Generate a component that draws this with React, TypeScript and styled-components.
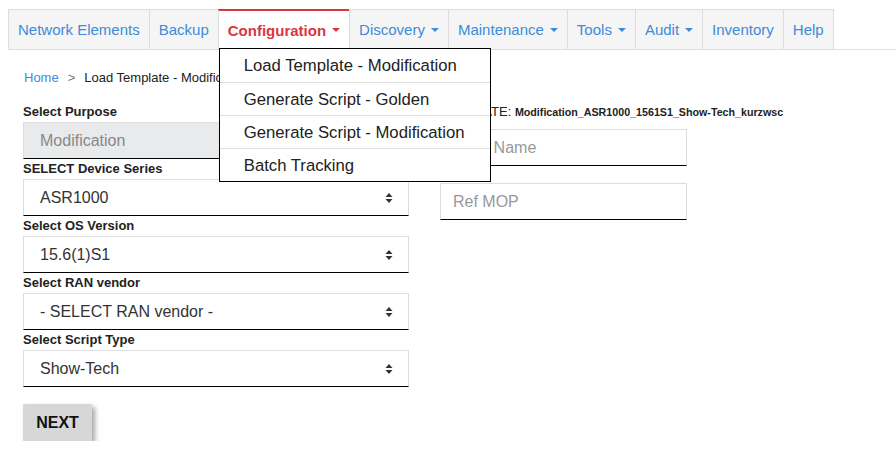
import React from "react";
import styled, { createGlobalStyle } from "styled-components";

const GlobalStyle = createGlobalStyle`
  body {
    margin: 9px 0 0 8px;
    font-family: "Liberation Sans", Arial, sans-serif;
    background: #fff;
    color: #222;
  }
`;

const Nav = styled.nav`
  position: relative;
  display: flex;
  height: 40px;
  border-bottom: 1px solid #ddd;
`;

const Tab = styled.div<{ $active?: boolean }>`
  position: relative;
  display: flex;
  align-items: center;
  gap: 6px;
  padding: 0 9px;
  font-size: 15px;
  color: ${(p) => (p.$active ? "#d9363e" : "#3d8bd9")};
  font-weight: ${(p) => (p.$active ? "bold" : "normal")};
  background: ${(p) => (p.$active ? "#fff" : "#f5f5f5")};
  border: 1px solid #ddd;
  border-top: ${(p) => (p.$active ? "2px solid #d9363e" : "1px solid #ddd")};
  border-bottom: none;
  margin-right: -1px;
`;

const Caret = styled.span`
  display: inline-block;
  border-left: 4px solid transparent;
  border-right: 4px solid transparent;
  border-top: 4px solid currentColor;
`;

const Menu = styled.ul`
  position: absolute;
  top: 37px;
  left: 0;
  width: 270px;
  margin: 0;
  padding: 0;
  list-style: none;
  background: #fff;
  border: 1px solid #000;
  z-index: 10;
`;

const MenuItem = styled.li`
  height: 33px;
  line-height: 33px;
  padding-left: 24px;
  font-size: 16.7px;
  font-weight: normal;
  color: #222;
  white-space: nowrap;
  border-top: 1px solid #ddd;
  box-sizing: border-box;
  &:first-child {
    border-top: none;
  }
`;

const Main = styled.main`
  padding: 18px 0 0 15px;
`;

const Crumbs = styled.div`
  display: flex;
  gap: 9px;
  font-size: 13px;
  color: #222;
  height: 18px;
  align-items: center;
  margin-bottom: 16px;
  padding-left: 1px;
`;

const CrumbLink = styled.a`
  color: #3d8bd9;
  text-decoration: none;
`;

const Sep = styled.span`
  color: #777;
`;

const Columns = styled.div`
  display: flex;
  gap: 31px;
`;

const Column = styled.div<{ $width: number }>`
  display: flex;
  flex-direction: column;
  width: ${(p) => p.$width}px;
`;

const Label = styled.label`
  display: block;
  font-size: 13px;
  font-weight: bold;
  line-height: 20px;
  color: #222;
`;

const Field = styled.div<{ $disabled?: boolean }>`
  display: flex;
  align-items: center;
  justify-content: space-between;
  box-sizing: border-box;
  height: 37px;
  padding: 0 15px 0 16px;
  font-size: 16px;
  color: ${(p) => (p.$disabled ? "#888" : "#333")};
  background: ${(p) => (p.$disabled ? "#e9eaeb" : "#fff")};
  border: 1px solid #ddd;
  border-bottom: 1px solid #000;
`;

const Arrows = styled.svg`
  width: 8px;
  height: 12px;
`;

const TemplateLine = styled.div`
  font-size: 13px;
  line-height: 20px;
  color: #222;
  margin-bottom: 7px;
  white-space: nowrap;
  b {
    font-size: 10.7px;
  }
`;

const TextInput = styled.input`
  box-sizing: border-box;
  width: 247px;
  height: 37px;
  padding: 0 12px;
  font-family: inherit;
  font-size: 16px;
  color: #333;
  border: 1px solid #ddd;
  border-bottom: 1px solid #000;
  outline: none;
  margin-bottom: 17px;
  &::placeholder {
    color: #999;
  }
`;

const NextButton = styled.button`
  margin-top: 17px;
  width: 69px;
  height: 37px;
  border: none;
  background: #d6d7d7;
  font-family: inherit;
  font-size: 16px;
  font-weight: bold;
  color: #111;
  box-shadow: 3px 3px 5px rgba(0, 0, 0, 0.35);
`;

const tabs = [
  { name: "Network Elements" },
  { name: "Backup" },
  { name: "Configuration", caret: true, active: true },
  { name: "Discovery", caret: true },
  { name: "Maintenance", caret: true },
  { name: "Tools", caret: true },
  { name: "Audit", caret: true },
  { name: "Inventory" },
  { name: "Help" },
];

const menuItems = [
  "Load Template - Modification",
  "Generate Script - Golden",
  "Generate Script - Modification",
  "Batch Tracking",
];

const selects = [
  { label: "SELECT Device Series", value: "ASR1000" },
  { label: "Select OS Version", value: "15.6(1)S1" },
  { label: "Select RAN vendor", value: "- SELECT RAN vendor -" },
  { label: "Select Script Type", value: "Show-Tech" },
];

const SortArrows = () => (
  <Arrows viewBox="0 0 8 12">
    <path d="M4 1 L7.5 5 H0.5 Z" fill="#333" />
    <path d="M4 11 L7.5 7 H0.5 Z" fill="#333" />
  </Arrows>
);

const App: React.FC = () => {
  return (
    <>
      <GlobalStyle />
      <Nav>
        {tabs.map((t) => (
          <Tab key={t.name} $active={t.active}>
            {t.name}
            {t.caret && <Caret />}
            {t.active && (
              <Menu>
                {menuItems.map((m) => (
                  <MenuItem key={m}>{m}</MenuItem>
                ))}
              </Menu>
            )}
          </Tab>
        ))}
      </Nav>
      <Main>
        <Crumbs>
          <CrumbLink href="#">Home</CrumbLink>
          <Sep>&gt;</Sep>
          <span>Load Template - Modification</span>
        </Crumbs>
        <Columns>
          <Column $width={386}>
            <Label>Select Purpose</Label>
            <Field $disabled>Modification</Field>
            {selects.map((s) => (
              <React.Fragment key={s.label}>
                <Label>{s.label}</Label>
                <Field>
                  {s.value}
                  <SortArrows />
                </Field>
              </React.Fragment>
            ))}
            <div>
              <NextButton>NEXT</NextButton>
            </div>
          </Column>
          <Column $width={320}>
            <TemplateLine>
              TEMPLATE: <b>Modification_ASR1000_1561S1_Show-Tech_kurzwsc</b>
            </TemplateLine>
            <TextInput placeholder="MOP Name" />
            <TextInput placeholder="Ref MOP" />
          </Column>
        </Columns>
      </Main>
    </>
  );
};

export default App;
